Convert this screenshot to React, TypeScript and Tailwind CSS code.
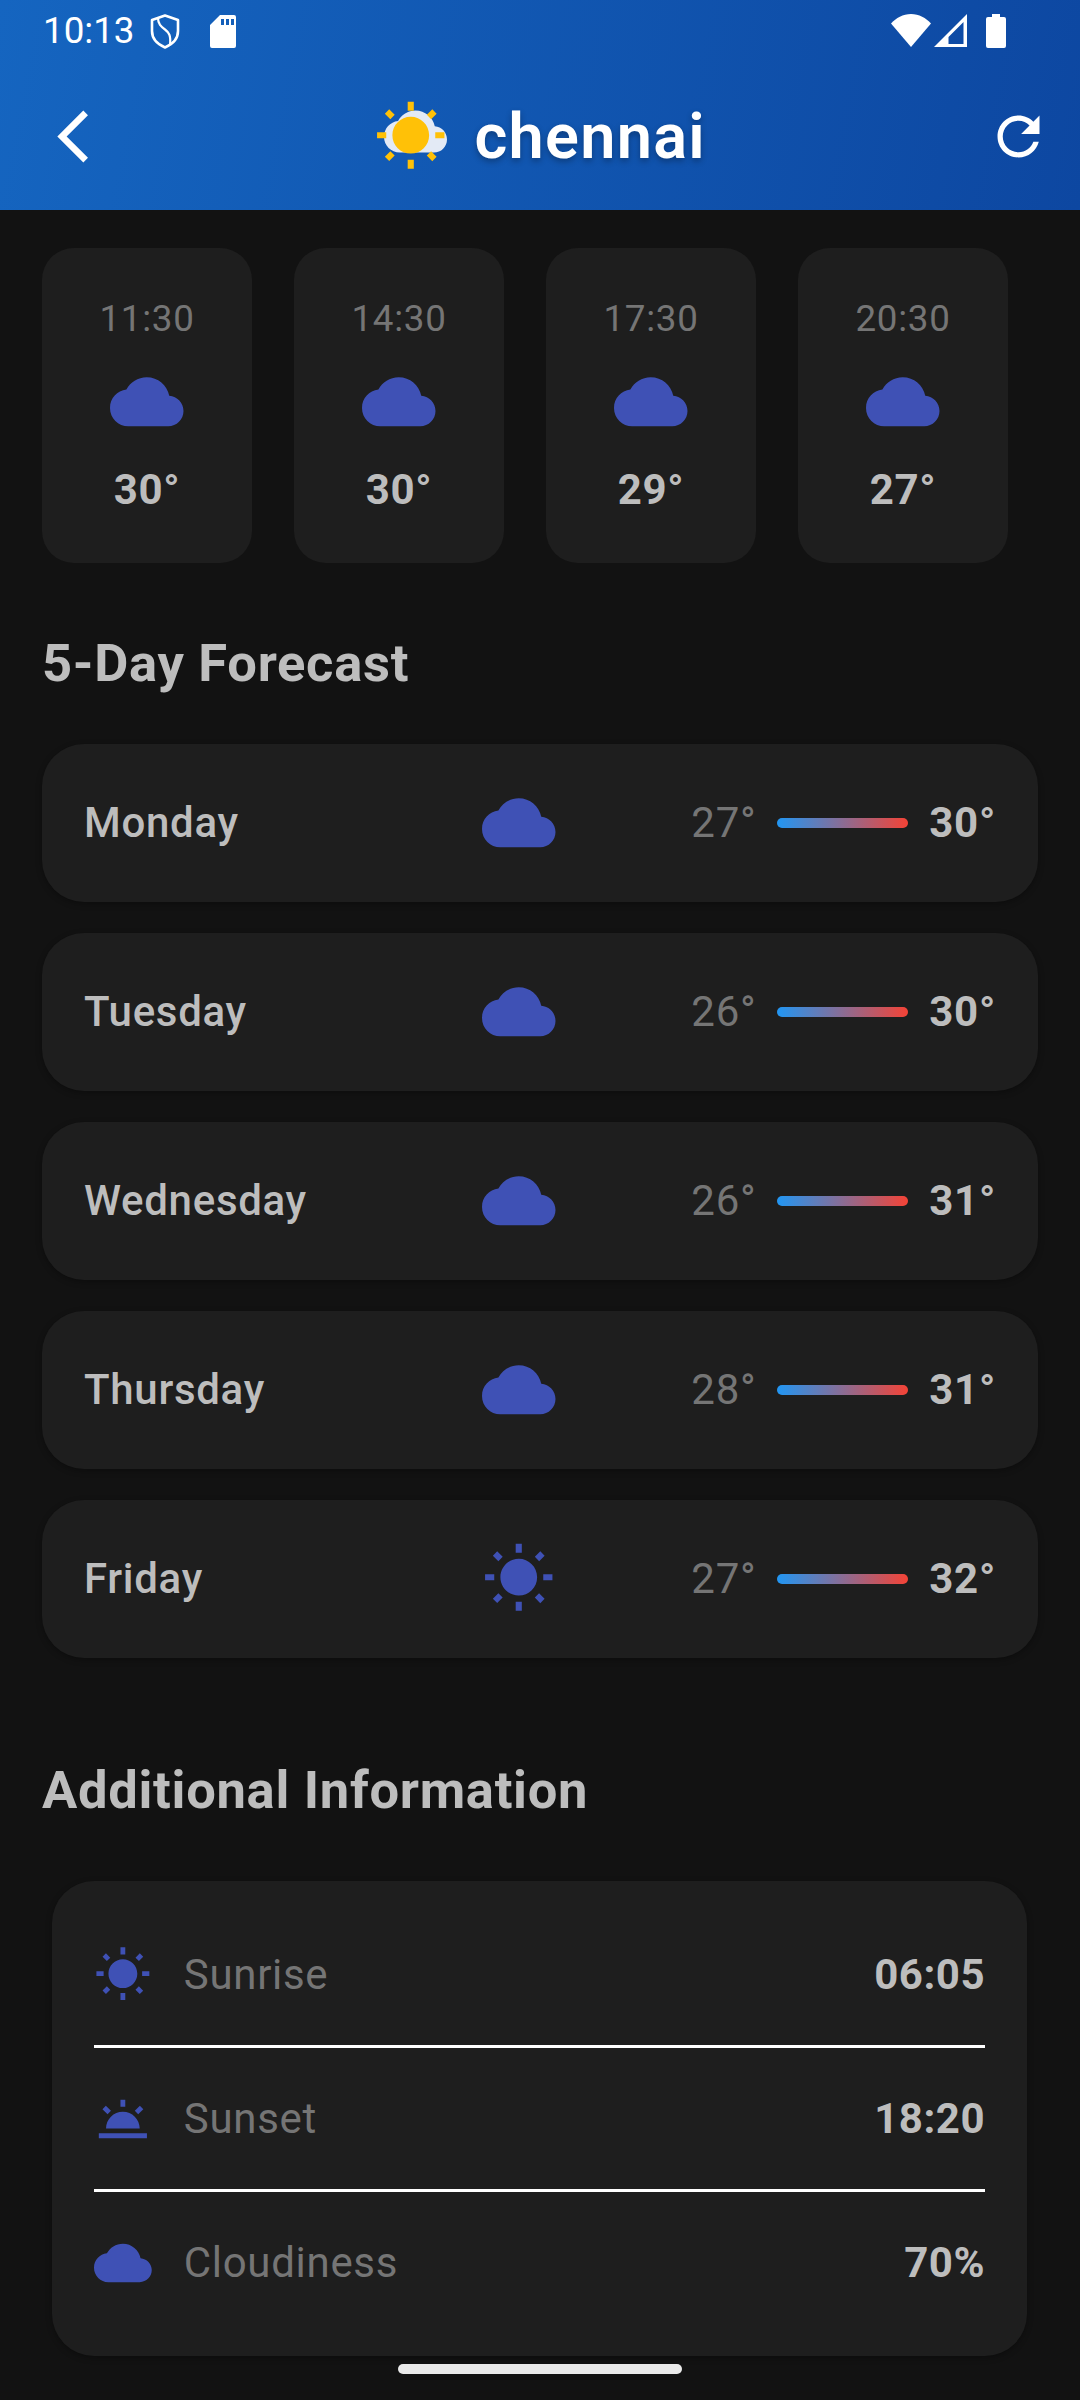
import React from 'react';

const CLOUD = 'M19.35 10.04C18.67 6.59 15.64 4 12 4 9.11 4 6.6 5.64 5.35 8.04 2.34 8.36 0 10.91 0 14c0 3.31 2.69 6 6 6h13c2.76 0 5-2.24 5-5 0-2.64-2.05-4.78-4.65-4.96z';
const SUN = 'M6.76 4.84l-1.8-1.79-1.41 1.41 1.79 1.79 1.42-1.41zM4 10.5H1v2h3v-2zm9-9.95h-2V3.5h2V.55zm7.45 3.91l-1.41-1.41-1.79 1.79 1.41 1.41 1.79-1.79zm-3.21 13.7l1.79 1.8 1.41-1.41-1.8-1.79-1.4 1.4zM20 10.5v2h3v-2h-3zm-8-5c-3.31 0-6 2.69-6 6s2.69 6 6 6 6-2.69 6-6-2.69-6-6-6zm-1 16.95h2V19.5h-2v2.95zm-7.45-3.91l1.41 1.41 1.79-1.8-1.41-1.41-1.8 1.8z';
const TWILIGHT = 'M16.955 8.662l2.12-2.122 1.415 1.414-2.121 2.122zM2 18h20v2H2zm9-14h2v3h-2zM3.512 7.955l1.414-1.414 2.121 2.12L5.633 10.076zM5 16h14c0-3.87-3.13-7-7-7s-7 3.13-7 7z';

const Icon = ({ d, className }: { d: string; className?: string }) => (
  <svg viewBox="0 0 24 24" fill="currentColor" className={className}>
    <path d={d} />
  </svg>
);

const hours = [
  { time: '11:30', temp: '30°' },
  { time: '14:30', temp: '30°' },
  { time: '17:30', temp: '29°' },
  { time: '20:30', temp: '27°' },
];

const days = [
  { name: 'Monday', icon: CLOUD, lo: '27°', hi: '30°' },
  { name: 'Tuesday', icon: CLOUD, lo: '26°', hi: '30°' },
  { name: 'Wednesday', icon: CLOUD, lo: '26°', hi: '31°' },
  { name: 'Thursday', icon: CLOUD, lo: '28°', hi: '31°' },
  { name: 'Friday', icon: SUN, lo: '27°', hi: '32°' },
];

const info = [
  { label: 'Sunrise', icon: SUN, value: '06:05' },
  { label: 'Sunset', icon: TWILIGHT, value: '18:20' },
  { label: 'Cloudiness', icon: CLOUD, value: '70%' },
];

const StatusBar = () => (
  <div className="h-[63px] flex items-start justify-between pl-[43px] pr-[74px] pt-[13px] text-white">
    <div className="flex items-start">
      <span className="text-[36.75px] leading-[36px] tracking-normal">10:13</span>
      <svg viewBox="0 0 30 35" className="w-[30px] h-[35px] ml-[15px] mt-px" fill="none" stroke="currentColor" strokeWidth="2.6" strokeLinejoin="round">
        <path d="M15 1.500 2 6v11c0 8 6 13.500 13 16.500 7-3 13-8.500 13-16.500V6z" />
        <path d="M8 4c0 6 3 8.500 7 11.500s6 6 5 15" strokeWidth="2.200" />
      </svg>
      <svg viewBox="0 0 26 33" className="w-[26px] h-[33px] ml-[30px] mt-[2px]" fill="currentColor">
        <path fillRule="evenodd" d="M10 0h14a2 2 0 0 1 2 2v29a2 2 0 0 1-2 2H2a2 2 0 0 1-2-2V10zM11 4v6h3V4zm5 0v6h3V4zm5 0v6h3V4z" />
      </svg>
    </div>
    <div className="flex items-start">
      <svg viewBox="0 0 40 33" className="w-[40px] h-[33px] mt-px" fill="currentColor">
        <path d="M20 33 0 9.500C5 4 12 0 20 0s15 4 20 9.500z" />
      </svg>
      <svg viewBox="0 0 33 33" className="w-[33px] h-[33px] ml-[3px] mt-px" fill="currentColor">
        <path fillRule="evenodd" d="M33 0v33H0zM29.500 8 14.500 23v7h15z" />
      </svg>
      <svg viewBox="0 0 20 34" className="w-[20px] h-[34px] ml-[19px] mt-px" fill="currentColor">
        <path d="M6 0h8v3h4a2 2 0 0 1 2 2v27a2 2 0 0 1-2 2H2a2 2 0 0 1-2-2V5a2 2 0 0 1 2-2h4z" />
      </svg>
    </div>
  </div>
);

const Header = () => (
  <header className="h-[210px] bg-[linear-gradient(101deg,#1565C0,#0D47A1)]">
    <StatusBar />
    <div className="h-[147px] flex items-center pl-[42px] pr-[30px] text-white">
      <svg viewBox="0 0 24 24" fill="currentColor" className="w-[63px] h-[63px] shrink-0">
        <path d="M17.51 3.87L15.73 2.1 5.84 12l9.9 9.9 1.78-1.77L9.38 12l8.13-8.13z" />
      </svg>
      <div className="flex-1 flex items-center justify-center gap-[27px] pr-[12px]">
        <div className="relative w-[73.5px] h-[73.5px]">
          <Icon d={CLOUD} className="absolute top-0 right-0 w-[63px] h-[63px] text-[#E3EAF5]" />
          <Icon d={SUN} className="absolute inset-0 w-[73.5px] h-[73.5px] text-[#FFC107]" />
        </div>
        <h1 className="text-[63px] leading-[74px] font-semibold tracking-[1.3px] [text-shadow:0_3px_6px_rgba(0,0,0,0.3)]">chennai</h1>
      </div>
      <svg viewBox="0 0 24 24" fill="currentColor" className="w-[63px] h-[63px] shrink-0">
        <path d="M17.65 6.35C16.2 4.9 14.21 4 12 4c-4.42 0-7.99 3.58-7.99 8s3.57 8 7.99 8c3.73 0 6.84-2.55 7.73-6h-2.08c-.82 2.33-3.04 4-5.65 4-3.31 0-6-2.69-6-6s2.69-6 6-6c1.66 0 3.14.69 4.22 1.78L13 11h7V4l-2.35 2.35z" />
      </svg>
    </div>
  </header>
);

export default function App() {
  return (
    <div className="relative w-[1080px] h-[2400px] overflow-hidden bg-[#121212] font-['Roboto',sans-serif] tracking-[0.7px]">
      <Header />

      <div className="flex gap-[42px] pl-[42px] pt-[38px]">
        {hours.map((h) => (
          <div key={h.time} className="w-[210px] h-[315px] rounded-[32px] bg-[#1E1E1E] flex flex-col items-center pt-[49px]">
            <span className="text-[36.75px] leading-[44px] text-[#757575]">{h.time}</span>
            <Icon d={CLOUD} className="w-[73.5px] h-[73.5px] mt-[24px] text-[#3F51B5]" />
            <span className="mt-[26px] text-[42px] leading-[50px] font-bold text-[#BDBDBD]">{h.temp}</span>
          </div>
        ))}
      </div>

      <h2 className="ml-[42px] mt-[70px] text-[52.5px] leading-[60px] font-bold text-[#BDBDBD]">5-Day Forecast</h2>

      <div className="flex flex-col gap-[31px] px-[42px] mt-[51px]">
        {days.map((d) => (
          <div key={d.name} className="h-[158px] rounded-[42px] bg-[#1E1E1E] shadow-[0_2px_6px_rgba(0,0,0,0.3)] flex items-center px-[42px]">
            <span className="w-[398px] text-[42px] leading-[50px] font-medium text-[#BDBDBD]">{d.name}</span>
            <Icon d={d.icon} className="w-[73.5px] h-[73.5px] text-[#3F51B5]" />
            <div className="flex-1 flex items-center justify-end gap-[21px]">
              <span className="text-[42px] leading-[50px] text-[#757575]">{d.lo}</span>
              <div className="w-[131px] h-[10px] rounded-[5px] bg-[linear-gradient(90deg,#2196F3,#F44336)]" />
              <span className="text-[42px] leading-[50px] font-bold text-[#BDBDBD]">{d.hi}</span>
            </div>
          </div>
        ))}
      </div>

      <h2 className="ml-[42px] mt-[98px] text-[52.5px] leading-[68px] font-bold text-[#BDBDBD]">Additional Information</h2>

      <div className="ml-[52px] mr-[53px] mt-[57px] h-[475px] rounded-[42px] bg-[#1E1E1E] shadow-[0_2px_6px_rgba(0,0,0,0.3)] px-[42px] py-[23px]">
        {info.map((row, i) => (
          <div key={row.label} className={i < info.length - 1 ? 'h-[144px] flex items-center border-b-[3px] border-white' : 'h-[141px] flex items-center'}>
            <Icon d={row.icon} className="w-[57.75px] h-[57.75px] text-[#3F51B5]" />
            <span className="ml-[32px] flex-1 text-[42px] leading-[50px] text-[#757575]">{row.label}</span>
            <span className="text-[42px] leading-[50px] font-bold text-[#BDBDBD] tracking-[0.5px]">{row.value}</span>
          </div>
        ))}
      </div>

      {/* gesture bar */}
      <div className="absolute left-[398px] top-[2364px] w-[284px] h-[10px] rounded-full bg-[#EAEAEA]" />
    </div>
  );
}
